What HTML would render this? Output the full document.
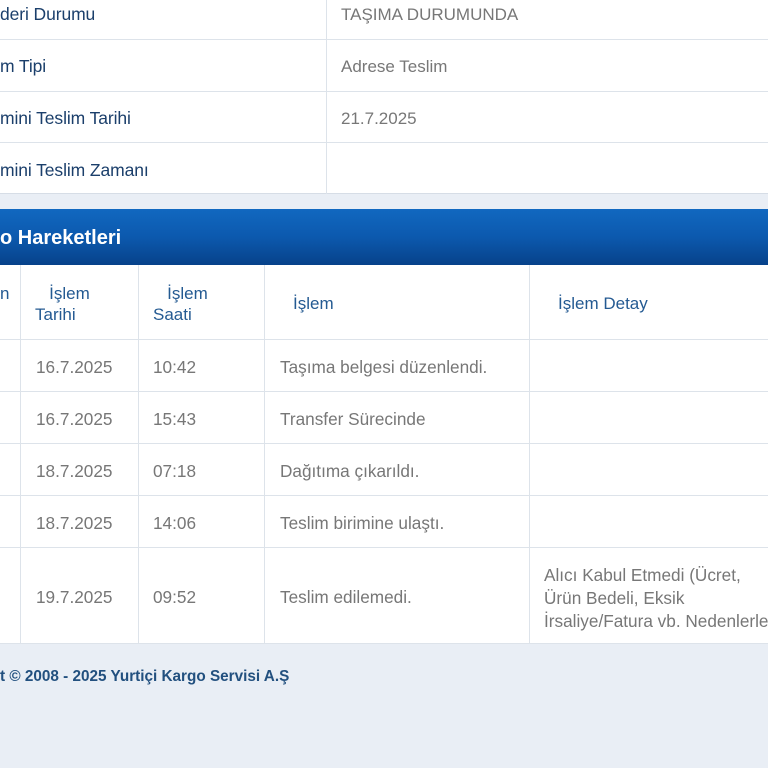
<!DOCTYPE html>
<html><head><meta charset="utf-8"><style>
*{margin:0;padding:0;box-sizing:border-box}
body{width:768px;height:768px;background:#e9eef5;font-family:"Liberation Sans",sans-serif;position:relative;overflow:hidden}
.abs{position:absolute}
.w{background:#fff}
.hl{position:absolute;height:1px;background:#dde3ea}
.vl{position:absolute;width:1px;background:#dde3ea}
.lab{position:absolute;color:#1b3f6b;font-size:17.5px;letter-spacing:-0.1px}
.val{position:absolute;color:#777;font-size:17px}
.th{position:absolute;color:#245a92;font-size:17px;line-height:21px}
.td{position:absolute;color:#777;font-size:17.2px}
</style></head><body>
<div class="abs w" style="left:0;top:0;width:768px;height:194px"></div>
<div class="hl" style="left:0;top:39px;width:768px"></div>
<div class="hl" style="left:0;top:91px;width:768px"></div>
<div class="hl" style="left:0;top:142px;width:768px"></div>
<div class="hl" style="left:0;top:193px;width:768px;background:#d6dde6"></div>
<div class="vl" style="left:326px;top:0;height:194px"></div>
<div class="lab" style="left:0;top:4px">deri Durumu</div>
<div class="lab" style="left:0;top:56px">m Tipi</div>
<div class="lab" style="left:0;top:108px">mini Teslim Tarihi</div>
<div class="lab" style="left:0;top:160px">mini Teslim Zamanı</div>
<div class="val" style="left:341px;top:5px">TAŞIMA DURUMUNDA</div>
<div class="val" style="left:341px;top:57px">Adrese Teslim</div>
<div class="val" style="left:341px;top:109px">21.7.2025</div>

<div class="abs" style="left:0;top:209px;width:768px;height:56px;background:linear-gradient(#1168c0,#0c59ae 50%,#07428a)"></div>
<div class="abs" style="left:0;top:227px;color:#fff;font-weight:bold;font-size:20px">o Hareketleri</div>

<div class="abs w" style="left:0;top:265px;width:768px;height:379px"></div>
<div class="hl" style="left:0;top:339px;width:768px"></div>
<div class="hl" style="left:0;top:391px;width:768px"></div>
<div class="hl" style="left:0;top:443px;width:768px"></div>
<div class="hl" style="left:0;top:495px;width:768px"></div>
<div class="hl" style="left:0;top:547px;width:768px"></div>
<div class="hl" style="left:0;top:643px;width:768px"></div>
<div class="vl" style="left:20px;top:265px;height:379px"></div>
<div class="vl" style="left:138px;top:265px;height:379px"></div>
<div class="vl" style="left:264px;top:265px;height:379px"></div>
<div class="vl" style="left:529px;top:265px;height:379px"></div>

<div class="th" style="left:0;top:283px">n</div>
<div class="th" style="left:35px;top:283px">&nbsp;&nbsp;&nbsp;İşlem<br>Tarihi</div>
<div class="th" style="left:153px;top:283px">&nbsp;&nbsp;&nbsp;İşlem<br>Saati</div>
<div class="th" style="left:293px;top:293px">İşlem</div>
<div class="th" style="left:558px;top:293px">İşlem Detay</div>

<div class="td" style="left:36px;top:357px">16.7.2025</div><div class="td" style="left:153px;top:357px">10:42</div><div class="td" style="left:280px;top:357px">Taşıma belgesi düzenlendi.</div>
<div class="td" style="left:36px;top:409px">16.7.2025</div><div class="td" style="left:153px;top:409px">15:43</div><div class="td" style="left:280px;top:409px">Transfer Sürecinde</div>
<div class="td" style="left:36px;top:461px">18.7.2025</div><div class="td" style="left:153px;top:461px">07:18</div><div class="td" style="left:280px;top:461px">Dağıtıma çıkarıldı.</div>
<div class="td" style="left:36px;top:513px">18.7.2025</div><div class="td" style="left:153px;top:513px">14:06</div><div class="td" style="left:280px;top:513px">Teslim birimine ulaştı.</div>
<div class="td" style="left:36px;top:587px">19.7.2025</div><div class="td" style="left:153px;top:587px">09:52</div><div class="td" style="left:280px;top:587px">Teslim edilemedi.</div>
<div class="td" style="left:544px;top:564px;line-height:23px;white-space:nowrap">Alıcı Kabul Etmedi (Ücret,<br>Ürün Bedeli, Eksik<br>İrsaliye/Fatura vb. Nedenlerle)</div>

<div class="abs" style="left:0;top:668px;color:#22507f;font-weight:bold;font-size:15.3px">t © 2008 - 2025 Yurtiçi Kargo Servisi A.Ş</div>
</body></html>
